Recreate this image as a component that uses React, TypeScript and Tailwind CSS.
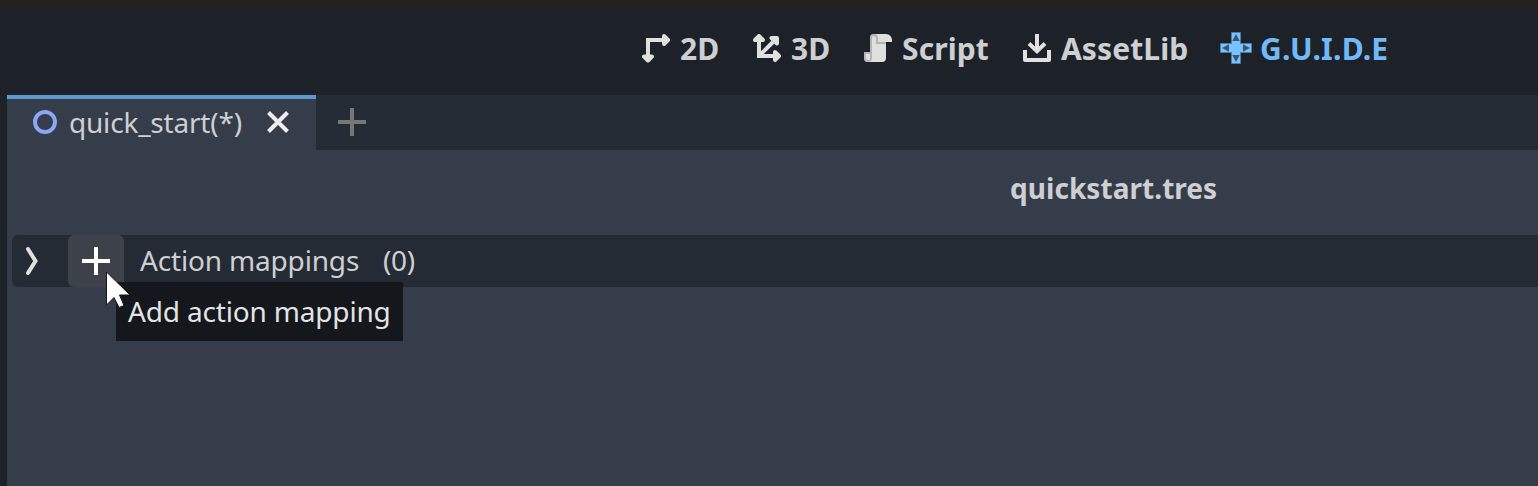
import type { ReactNode } from "react";

function Icon2D() {
  return (
    <svg width="30" height="30" viewBox="0 0 30 30" fill="none" stroke="#e0e0e0" strokeWidth="4">
      <path d="M6 24V7H22" />
      <path d="M2 23.500h8L6 27.500Z M22 3v8L26 7Z" fill="#e0e0e0" strokeLinejoin="round" />
    </svg>
  );
}

function Icon3D() {
  return (
    <svg width="28" height="28" viewBox="0 0 28 28" fill="none" stroke="#e0e0e0" strokeWidth="4">
      <path d="M6 6V22H22M6 22L20 8" />
      <path d="M2 6h8L6 2Z M22 18v8L26 22Z M18.500 4h5.500v5.500Z" fill="#e0e0e0" strokeLinejoin="round" />
    </svg>
  );
}

function IconScript() {
  return (
    <svg width="28" height="28" viewBox="0 0 28 28">
      <path d="M10 0h12a6 6 0 0 1 6 6v2h-6v16a4 4 0 0 1-4 4H4a4 4 0 0 1-4-4v-6h6V4a4 4 0 0 1 4-4Z" fill="#e0e0e0" />
      <path
        d="M10 0a4 4 0 0 0-4 4v14H0v6a4 4 0 0 0 8 0V4a2 2 0 0 1 4 0v6h10V8h-8V4a4 4 0 0 0-4-4ZM1.800 20H6v4a2.100 2.100 0 0 1-4.200 0Z"
        fill="#b4b4b4"
      />
    </svg>
  );
}

function IconAssetLib() {
  return (
    <svg width="28" height="28" viewBox="0 0 28 28" fill="none" stroke="#e0e0e0" strokeWidth="4">
      <path d="M14 0v17M6 9.500l8 7.800 8-7.800" />
      <path d="M2 16v10h24V16" strokeLinejoin="round" />
    </svg>
  );
}

function IconGuide() {
  return (
    <svg width="32" height="32" viewBox="0 0 32 32">
      <path d="M11.500.5h9v11h11v9h-11v11h-9v-11H.5v-9h11Z" fill="#78c3ff" stroke="#4c7c9f" />
      <path d="M16 2l3.800 7h-7.600ZM16 30l3.800-7h-7.600ZM2 16l7-3.800v7.600ZM30 16l-7-3.800v7.600Z" fill="#365873" />
    </svg>
  );
}

function ModeButton({ width, icon, label, active }: { width: string; icon: ReactNode; label: string; active?: boolean }) {
  return (
    <button className={`flex shrink-0 items-start text-left text-[30px] font-bold leading-10 ${width} ${active ? "tracking-[0.25px] text-[#70bafa]" : "tracking-[0.1px] text-[#cdcfd2]"}`}>
      <span className={`mt-1 flex h-8 shrink-0 items-center ${active ? "w-10" : "w-[38px]"}`}>{icon}</span>
      <span className="mt-px whitespace-nowrap">{label}</span>
    </button>
  );
}

export default function App() {
  return (
    <div
      className="flex h-[486px] w-[1538px] flex-col overflow-hidden bg-[#1d2229] text-[28px] text-[#cdcfd2]"
      style={{ fontFamily: '"Noto Sans", sans-serif' }}
    >
      <div className="h-[9px] shrink-0 bg-[#25211f]" />
      <nav className="flex h-[86px] shrink-0 items-start pl-[642px] pt-[19px]">
        <ModeButton width="w-[111px]" icon={<Icon2D />} label="2D" />
        <ModeButton width="w-[111px]" icon={<Icon3D />} label="3D" />
        <ModeButton width="w-[159px]" icon={<IconScript />} label="Script" />
        <ModeButton width="w-[197px]" icon={<IconAssetLib />} label="AssetLib" />
        <ModeButton width="w-[180px]" icon={<IconGuide />} label="G.U.I.D.E" active />
      </nav>
      <div className="ml-[7px] flex h-[55px] shrink-0 bg-[#252b34]">
        <div className="flex w-[309px] items-start border-t-4 border-[#5c97cd] bg-[#363d4a] pl-[26px]">
          <svg className="mt-[11px] shrink-0" width="24" height="24" viewBox="0 0 24 24">
            <circle cx="12" cy="12" r="10" fill="none" stroke="#8da5f3" strokeWidth="4" />
          </svg>
          <span className="ml-3 mt-1 w-[197px] whitespace-nowrap leading-[38px] tracking-[-0.2px]">quick_start(*)</span>
          <svg className="mt-[11px] shrink-0" width="24" height="24" viewBox="0 0 24 24">
            <path d="M2.500 2.500l19 19M21.500 2.500l-19 19" stroke="#ededed" strokeWidth="4" />
          </svg>
        </div>
        <div className="flex items-start pl-[22px] pt-[13px]">
          <svg width="28" height="28" viewBox="0 0 28 28">
            <path d="M14 0v28M0 14h28" stroke="#747677" strokeWidth="4" />
          </svg>
        </div>
      </div>
      <main className="ml-[7px] flex grow flex-col bg-[#363d4a]">
        <h1 className="flex h-[85px] items-start pl-[1003px] pt-[19px] text-[28px] font-bold leading-[38px] tracking-[0.05px]">quickstart.tres</h1>
        <div className="ml-[5px] flex h-[52px] items-center rounded-l-[6px] bg-[#252b34]">
          <svg className="ml-3 shrink-0" width="16" height="32" viewBox="0 0 16 32">
            <path d="M4 4l7.500 12L4 28" fill="none" stroke="#e0e0e0" strokeWidth="4" strokeLinecap="round" />
          </svg>
          <button className="relative ml-7 flex h-[52px] w-14 shrink-0 items-center justify-center rounded-[6px] bg-[#3d4149]">
            <svg width="28" height="28" viewBox="0 0 28 28">
              <path d="M14 0v28M0 14h28" stroke="#ffffff" strokeWidth="4" />
            </svg>
            <span className="absolute left-12 top-[47px] z-10 flex h-[59px] w-[287px] items-center whitespace-nowrap bg-[#14171b] pb-[2px] pl-3 text-left text-[28px] leading-[38px] tracking-[-0.17px] text-[#e2e3e4]">
              Add action mapping
            </span>
            <svg className="absolute left-[37px] top-[35px] z-20" width="28" height="42" viewBox="0 0 28 42">
              <path d="M1.500 2v33l7.500-7.500 5 10 5-2-4.500-10.500H25Z" fill="#ffffff" stroke="#14171b" strokeWidth="1" />
            </svg>
          </button>
          <span className="mb-[2px] ml-4 w-[243px] whitespace-nowrap leading-[38px] tracking-[-0.17px]">Action mappings</span>
          <span className="mb-[2px] leading-[38px] tracking-[-0.3px]">(0)</span>
        </div>
      </main>
    </div>
  );
}
